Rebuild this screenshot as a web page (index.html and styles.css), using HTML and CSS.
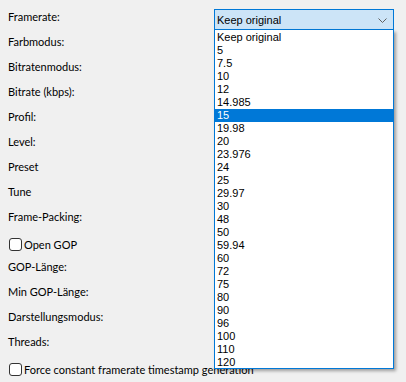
FILE: index.html
```html
<!DOCTYPE html>
<html lang="de">
<head>
  <meta charset="UTF-8">
  <title>Video-Einstellungen</title>
  <link rel="stylesheet" href="styles.css">
</head>
<body>

  <div class="panel">
    <div class="row first">
      <label>Framerate:</label>
      <div class="combo">
        <span>Keep original</span>
        <svg class="chevron" width="9" height="5" viewBox="0 0 9 5"><path d="M0.5 0.5 L4.5 4.5 L8.5 0.5" fill="none" stroke="#606060" stroke-width="1"/></svg>
      </div>
    </div>
    <div class="row"><label>Farbmodus:</label></div>
    <div class="row"><label>Bitratenmodus:</label></div>
    <div class="row"><label>Bitrate (kbps):</label></div>
    <div class="row"><label>Profil:</label></div>
    <div class="row"><label>Level:</label></div>
    <div class="row"><label>Preset</label></div>
    <div class="row"><label>Tune</label></div>
    <div class="row"><label>Frame-Packing:</label></div>
    <div class="row check"><span class="box"></span><label>Open GOP</label></div>
    <div class="row"><label>GOP-Länge:</label></div>
    <div class="row"><label>Min GOP-Länge:</label></div>
    <div class="row"><label>Darstellungsmodus:</label></div>
    <div class="row"><label>Threads:</label></div>
    <div class="row check"><span class="box"></span><label>Force constant framerate timestamp generation</label></div>

    <ul class="dropdown">
      <li>Keep original</li>
      <li>5</li>
      <li>7.5</li>
      <li>10</li>
      <li>12</li>
      <li>14.985</li>
      <li class="selected">15</li>
      <li>19.98</li>
      <li>20</li>
      <li>23.976</li>
      <li>24</li>
      <li>25</li>
      <li>29.97</li>
      <li>30</li>
      <li>48</li>
      <li>50</li>
      <li>59.94</li>
      <li>60</li>
      <li>72</li>
      <li>75</li>
      <li>80</li>
      <li>90</li>
      <li>96</li>
      <li>100</li>
      <li>110</li>
      <li>120</li>
    </ul>
  </div>

</body>
</html>
```

FILE: styles.css
```css
body {
  margin: 0;
  background: #f0f0f0;
  font-family: "Segoe UI", Lato, sans-serif;
  font-size: 11px;
  color: #000;
}

.panel {
  position: relative;
  height: 382px;
  padding: 4px 0 0 8px;
  box-sizing: border-box;
  overflow: hidden;
}

.row {
  height: 25px;
  display: flex;
  align-items: center;
  white-space: nowrap;
}

.row.first {
  align-items: flex-start;
}

.row.first label {
  line-height: 25px;
}

.combo {
  margin-left: auto;
  margin-right: 12px;
  margin-top: 5px;
  width: 180px;
  height: 21px;
  box-sizing: border-box;
  border: 1px solid #0078d7;
  background: #cce4f7;
  display: flex;
  align-items: center;
  padding: 0 6px 0 2px;
  font-family: "Liberation Sans", Arial, sans-serif;
  font-size: 11px;
}

.chevron {
  margin-left: auto;
  margin-top: 1px;
}

.check {
  padding-top: 5px;
  box-sizing: border-box;
}

.box {
  width: 13px;
  height: 13px;
  box-sizing: border-box;
  border: 1px solid #333;
  border-radius: 3px;
  background: #fff;
  margin: 0 2px 0 1px;
}

.dropdown {
  position: absolute;
  left: 214px;
  top: 30px;
  width: 180px;
  height: 339px;
  box-sizing: border-box;
  margin: 0;
  padding: 0;
  list-style: none;
  background: #fff;
  border: 1px solid #0078d7;
  border-top: none;
  box-shadow: 2px 2px 3px rgba(0, 0, 0, 0.35);
  font-family: "Liberation Sans", Arial, sans-serif;
  font-size: 11px;
}

.dropdown li {
  height: 13px;
  line-height: 13px;
  padding-left: 2px;
}

.dropdown li:first-child {
  margin-top: 1px;
}

.dropdown li.selected {
  background: #0078d7;
  color: #fff;
}
```
